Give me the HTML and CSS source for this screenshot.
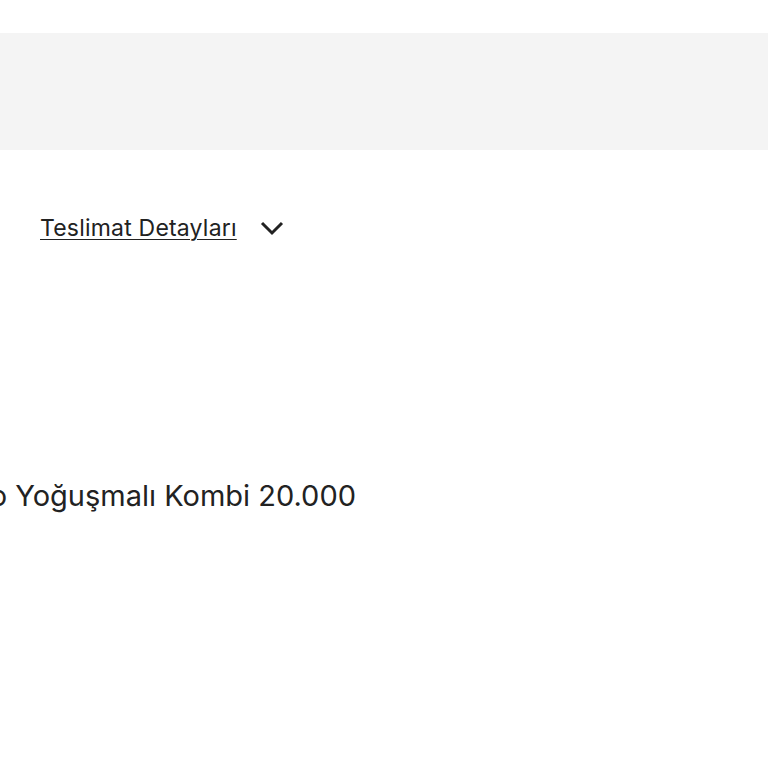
FILE: index.html
```html
<!DOCTYPE html>
<html lang="tr">
<head>
<meta charset="utf-8">
<link rel="stylesheet" href="styles.css">
</head>
<body>
<div class="top-space"></div>
<div class="band"></div>
<div class="delivery">
  <a class="delivery-link" href="#">Teslimat Detayları</a>
  <svg class="chevron" width="24" height="24" viewBox="0 0 24 24"><path d="M2 7 L12 17 L22 7" fill="none" stroke="#222" stroke-width="3"/></svg>
</div>
<div class="title-wrap">
  <h1 class="title">Vaillant ecoTEC Pro Yoğuşmalı Kombi 20.000</h1>
</div>
</body>
</html>
```
FILE: styles.css
```css
html, body {
  margin: 0;
  padding: 0;
  background: #fff;
  font-family: "Inter", "Noto Sans", sans-serif;
  color: #222;
}
.top-space { height: 33px; }
.band { height: 117px; background: #f4f4f4; }
.delivery {
  display: flex;
  align-items: center;
  gap: 23px;
  padding: 63px 0 0 40px;
  height: 30px;
}
.delivery-link {
  font-size: 23px;
  color: #222;
  text-decoration: underline;
  text-underline-offset: 3px;
  text-decoration-thickness: 1px;
  letter-spacing: 0.2px;
}
.chevron { display: block; }
.title-wrap {
  width: 356px;
  overflow: hidden;
  display: flex;
  justify-content: flex-end;
  margin-top: 236px;
}
.title {
  margin: 0;
  font-size: 29px;
  font-weight: 400;
  white-space: nowrap;
  letter-spacing: 0;
  line-height: 34px;
  flex-shrink: 0;
}
```
